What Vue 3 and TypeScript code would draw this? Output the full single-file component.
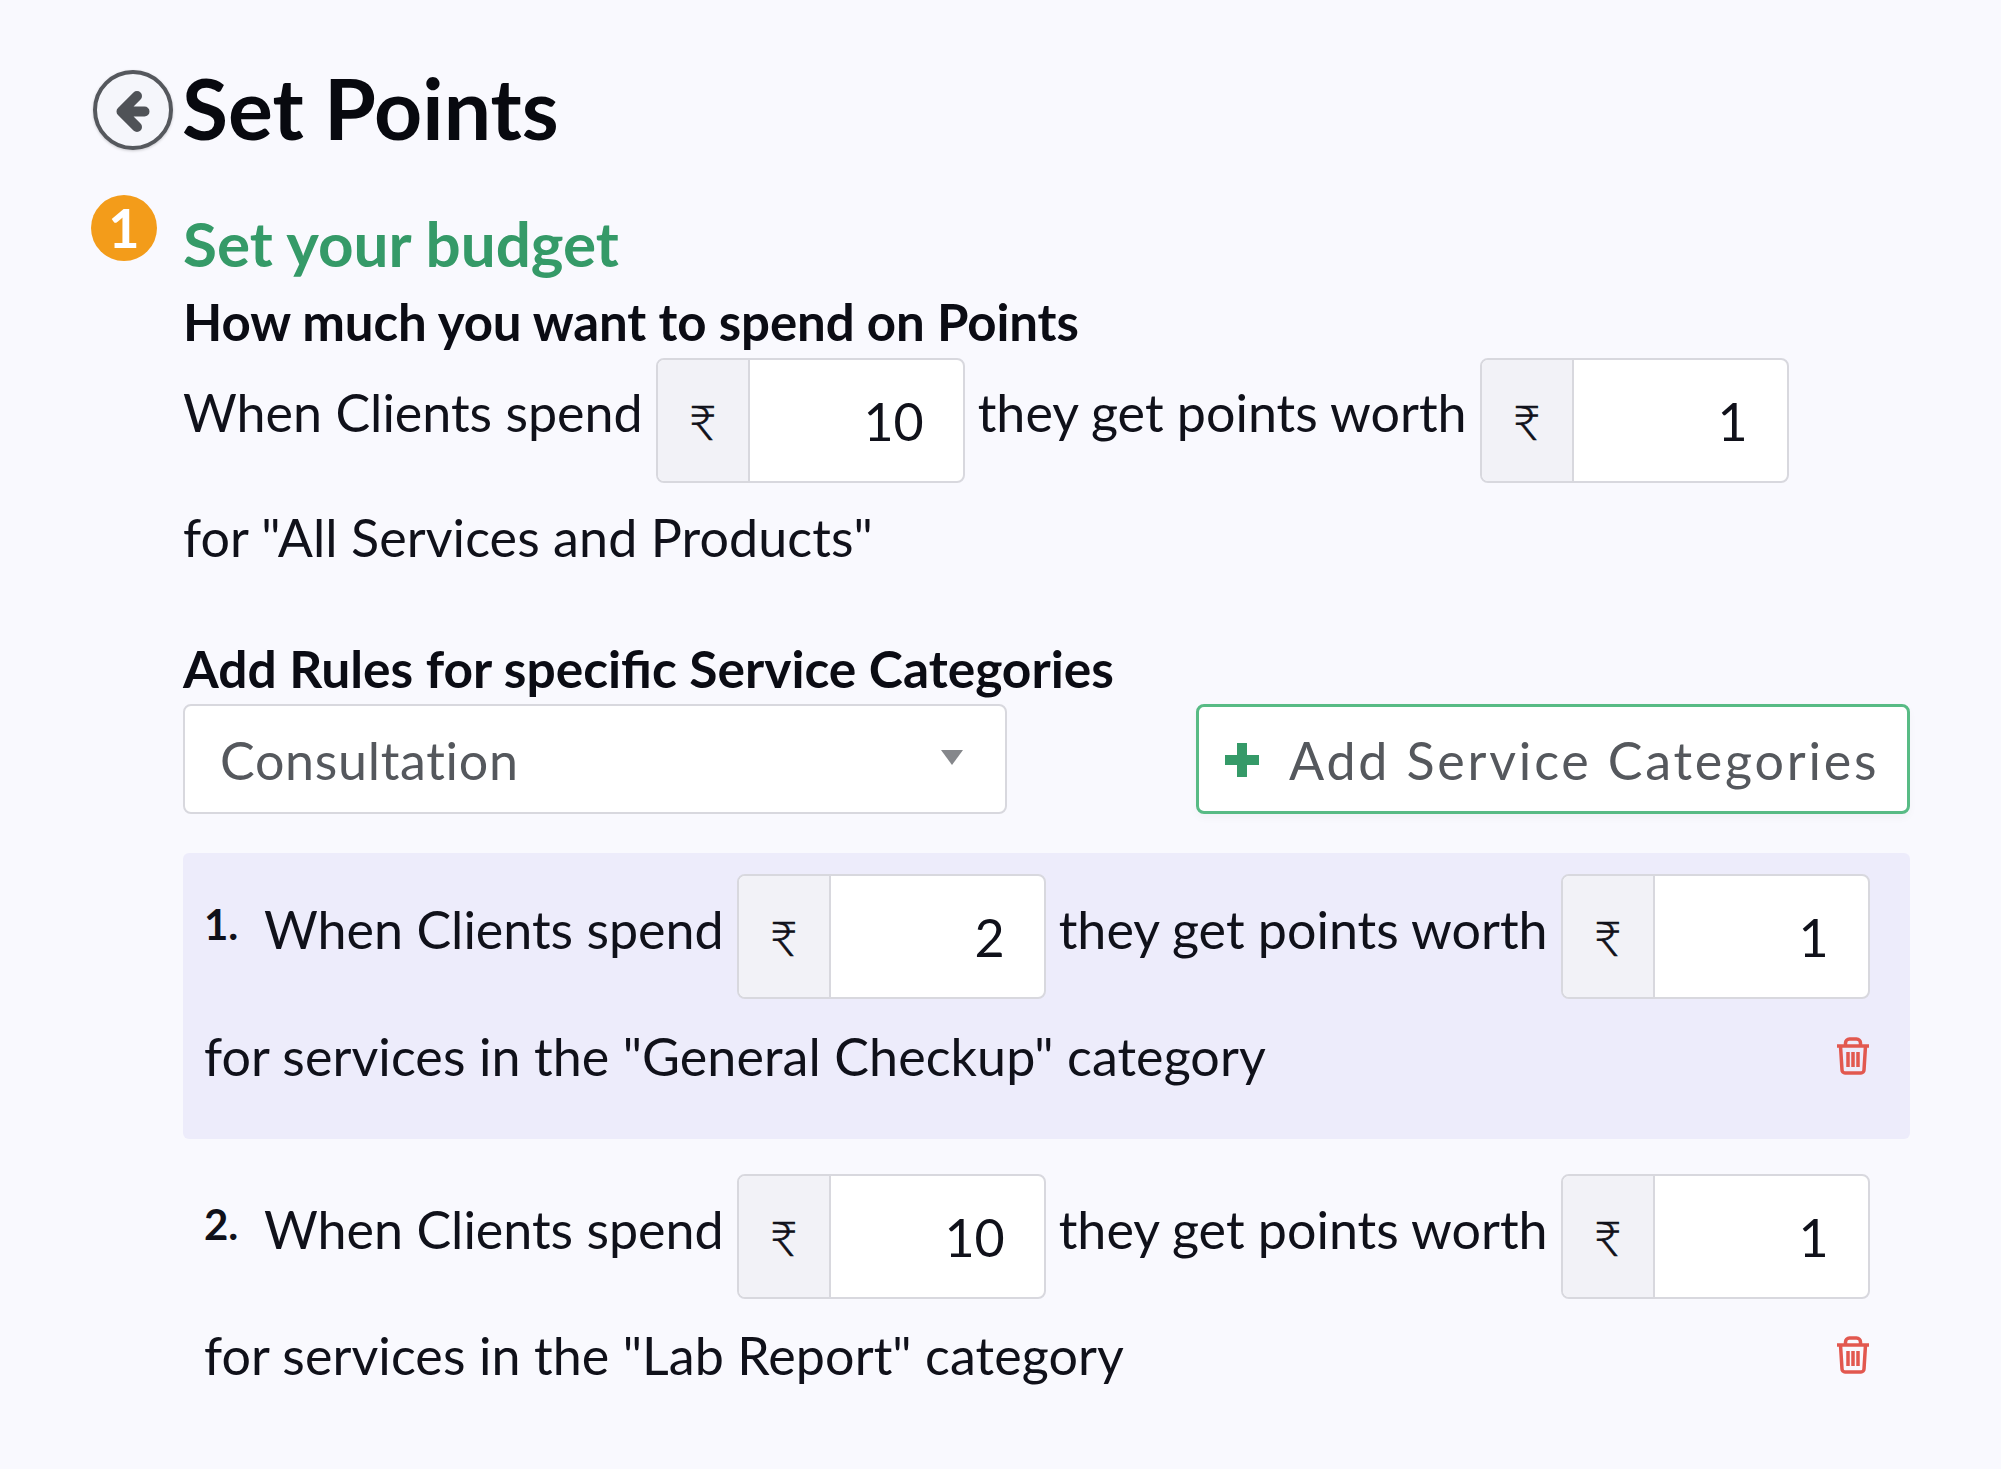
<template>
  <div class="page">
    <header class="title-row">
      <button class="back-btn" aria-label="Back">
        <svg width="56" height="56" viewBox="0 0 56 56" fill="none">
          <path d="M39.500 29.500H20M32 14L16.500 29.500L32 45" stroke="#4f5257" stroke-width="10" stroke-linecap="round" stroke-linejoin="round"/>
        </svg>
      </button>
      <h1>Set Points</h1>
    </header>

    <section class="step">
      <div class="step-badge">1</div>
      <div class="step-body">
        <h2>Set your budget</h2>
        <h3 class="sub-first">How much you want to spend on Points</h3>
        <div class="rule-line">
          <span class="txt">When Clients spend</span>
          <div class="amount">
            <span class="rupee">₹</span>
            <input class="amount-input" :value="10" readonly />
          </div>
          <span class="txt">they get points worth</span>
          <div class="amount">
            <span class="rupee">₹</span>
            <input class="amount-input" :value="1" readonly />
          </div>
        </div>
        <p class="for-line">for "All Services and Products"</p>

        <h3 class="sub-rules">Add Rules for specific Service Categories</h3>
        <div class="picker-row">
          <div class="picker">
            <span>Consultation</span>
            <i class="caret"></i>
          </div>
          <button class="add-btn">
            <svg width="34" height="34" viewBox="0 0 34 34"><path d="M17 1v32M1 17h32" stroke="#359a68" stroke-width="10" stroke-linecap="round"/></svg>
            <span>Add Service Categories</span>
          </button>
        </div>

        <div
          v-for="(rule, i) in rules"
          :key="rule.category"
          class="rule-card"
          :class="{ shaded: i % 2 === 0 }"
        >
          <div class="rule-line">
            <span class="num">{{ i + 1 }}.</span>
            <span class="txt">When Clients spend</span>
            <div class="amount">
              <span class="rupee">₹</span>
              <input class="amount-input" :value="rule.spend" readonly />
            </div>
            <span class="txt">they get points worth</span>
            <div class="amount">
              <span class="rupee">₹</span>
              <input class="amount-input" :value="rule.worth" readonly />
            </div>
          </div>
          <div class="card-foot">
            <p class="for-line">for services in the "{{ rule.category }}" category</p>
            <svg class="trash" width="34" height="38" viewBox="0 0 34 38" fill="none" stroke="#e2584f" stroke-width="3.500">
              <path d="M1 9h32M4.500 9l1.500 24a3 3 0 0 0 3 3h16a3 3 0 0 0 3-3l1.500-24M9.500 9V6a4 4 0 0 1 4-4h7a4 4 0 0 1 4 4v3M12 15v15M17 15v15M22 15v15"/>
            </svg>
          </div>
        </div>
      </div>
    </section>
  </div>
</template>

<script setup lang="ts">
interface Rule {
  spend: number
  worth: number
  category: string
}

const rules: Rule[] = [
  { spend: 2, worth: 1, category: 'General Checkup' },
  { spend: 10, worth: 1, category: 'Lab Report' },
]
</script>

<style>
html,
body {
  background: #f9f9fe;
}
</style>

<style scoped>
.page {
  width: 2001px;
  height: 1469px;
  box-sizing: border-box;
  overflow: hidden;
  padding: 62px 91px 0 91px;
  background: #f9f9fe;
  font-family: Lato, "Liberation Sans", sans-serif;
  color: #10111a;
}

.title-row {
  display: flex;
  align-items: center;
  gap: 9px;
  height: 96px;
  margin-left: -1px;
}

.title-row h1 {
  margin: 0;
  padding-bottom: 5px;
  font-size: 84px;
  line-height: 96px;
  font-weight: 700;
  color: #08090f;
}

.back-btn {
  width: 80px;
  height: 80px;
  margin-left: 3px;
  padding: 0;
  box-sizing: border-box;
  display: flex;
  align-items: center;
  justify-content: center;
  border: 4px solid #55585d;
  border-radius: 50%;
  background: #f5f6fb;
  box-shadow: 0 1px 3px rgba(0, 0, 0, 0.2);
}

.step {
  display: flex;
  margin-top: 37px;
}

.step-badge {
  width: 66px;
  height: 66px;
  margin-right: 26px;
  border-radius: 50%;
  background: #f39c1a;
  color: #fff;
  font-size: 54px;
  font-weight: 700;
  line-height: 66px;
  text-align: center;
}

.step-body {
  flex: 1;
  min-width: 0;
}

h2 {
  margin: 11px 0 0;
  font-size: 62px;
  line-height: 74px;
  font-weight: 700;
  color: #359a68;
}

h3 {
  margin: 0;
  font-size: 51px;
  line-height: 62px;
  font-weight: 700;
  color: #0b0c14;
}

.sub-first {
  margin-top: 11px;
  letter-spacing: -0.1px;
}

.sub-rules {
  margin-top: 45px;
  font-size: 51.500px;
}

.rule-line {
  display: flex;
  align-items: flex-start;
  gap: 13px;
  margin-top: 5px;
}

.txt,
.for-line {
  font-size: 52px;
  line-height: 109px;
  white-space: nowrap;
}

.txt {
  height: 109px;
}

.for-line {
  margin: 0;
  letter-spacing: 0.08px;
}

.amount {
  display: flex;
  width: 309px;
  height: 125px;
  box-sizing: border-box;
  border: 2px solid #d8d8de;
  border-radius: 8px;
  overflow: hidden;
  background: #fff;
}

.rupee {
  flex: none;
  width: 92px;
  padding-top: 2px;
  box-sizing: border-box;
  display: flex;
  align-items: center;
  justify-content: center;
  border-right: 2px solid #d8d8de;
  background: #f2f2f7;
  font-size: 48px;
  font-weight: 300;
  -webkit-text-stroke: 0.7px #10111a;
  font-family: Lato, "DejaVu Sans", sans-serif;
}

.amount-input {
  flex: 1;
  min-width: 0;
  padding: 0 39px 0 0;
  border: 0;
  outline: 0;
  background: transparent;
  text-align: right;
  font: 52px Lato, sans-serif;
  color: #10111a;
}

.picker-row {
  display: flex;
  justify-content: space-between;
  align-items: stretch;
  margin-top: 5px;
}

.picker {
  width: 824px;
  height: 110px;
  box-sizing: border-box;
  padding: 2px 42px 0 35px;
  display: flex;
  align-items: center;
  justify-content: space-between;
  border: 2px solid #d8d8de;
  border-radius: 8px;
  background: #fff;
  font-size: 52px;
  letter-spacing: 0.7px;
  color: #55585d;
}

.caret {
  width: 0;
  height: 0;
  margin-bottom: 6px;
  border-left: 11px solid transparent;
  border-right: 11px solid transparent;
  border-top: 15px solid #85878b;
}

.add-btn {
  width: 714px;
  height: 110px;
  box-sizing: border-box;
  padding: 2px 0 0 26px;
  display: flex;
  align-items: center;
  gap: 30px;
  border: 3px solid #58bb85;
  border-radius: 8px;
  background: #fff;
  box-shadow: 0 4px 8px rgba(0, 0, 0, 0.03);
  font: 52px Lato, sans-serif;
  letter-spacing: 2.800px;
  color: #55585d;
}

.rule-card {
  margin-top: 39px;
  padding: 21px 38px 0 21px;
  height: 286px;
  box-sizing: border-box;
  border-radius: 6px;
}

.rule-card.shaded {
  background: #edecfb;
}

.rule-card + .rule-card {
  margin-top: 0;
  padding-top: 35px;
}

.rule-card .rule-line {
  margin-top: 0;
}

.rule-card .txt {
  line-height: 110px;
}

.rule-card .for-line {
  line-height: 114px;
}

.rule-card + .rule-card .for-line {
  line-height: 112px;
}

.num {
  width: 44px;
  margin-right: 3px;
  font-size: 42px;
  line-height: 100px;
  font-weight: 700;
}

.card-foot {
  display: flex;
  align-items: center;
  justify-content: space-between;
}

.trash {
  margin-right: 2px;
}
</style>
